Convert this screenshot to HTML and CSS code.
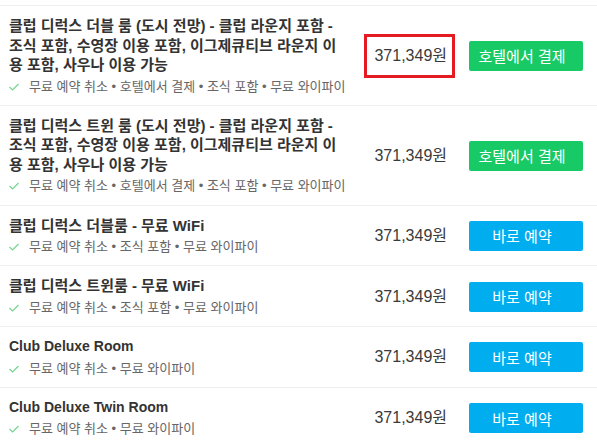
FILE: index.html
```html
<!DOCTYPE html>
<html lang="ko">
<head>
<meta charset="utf-8">
<title>객실 목록</title>
<link rel="stylesheet" href="styles.css">
</head>
<body>
<div class="room-list">
  <div class="room">
    <div class="info">
      <div class="title">클럽 디럭스 더블 룸 (도시 전망) - 클럽 라운지 포함 - 조식 포함, 수영장 이용 포함, 이그제큐티브 라운지 이용 포함, 사우나 이용 가능</div>
      <div class="meta"><svg class="check" viewBox="0 0 10 8" width="10" height="8"><polyline points="0.5,4 3.5,7 9.5,1"/></svg>무료 예약 취소 • 호텔에서 결제 • 조식 포함 • 무료 와이파이</div>
    </div>
    <div class="price-col"><span class="price highlight">371,349원</span></div>
    <button class="btn btn-hotel">호텔에서 결제</button>
  </div>
  <div class="room">
    <div class="info">
      <div class="title">클럽 디럭스 트윈 룸 (도시 전망) - 클럽 라운지 포함 - 조식 포함, 수영장 이용 포함, 이그제큐티브 라운지 이용 포함, 사우나 이용 가능</div>
      <div class="meta"><svg class="check" viewBox="0 0 10 8" width="10" height="8"><polyline points="0.5,4 3.5,7 9.5,1"/></svg>무료 예약 취소 • 호텔에서 결제 • 조식 포함 • 무료 와이파이</div>
    </div>
    <div class="price-col"><span class="price">371,349원</span></div>
    <button class="btn btn-hotel">호텔에서 결제</button>
  </div>
  <div class="room">
    <div class="info">
      <div class="title">클럽 디럭스 더블룸 - 무료 WiFi</div>
      <div class="meta"><svg class="check" viewBox="0 0 10 8" width="10" height="8"><polyline points="0.5,4 3.5,7 9.5,1"/></svg>무료 예약 취소 • 조식 포함 • 무료 와이파이</div>
    </div>
    <div class="price-col"><span class="price">371,349원</span></div>
    <button class="btn btn-book">바로 예약</button>
  </div>
  <div class="room">
    <div class="info">
      <div class="title">클럽 디럭스 트윈룸 - 무료 WiFi</div>
      <div class="meta"><svg class="check" viewBox="0 0 10 8" width="10" height="8"><polyline points="0.5,4 3.5,7 9.5,1"/></svg>무료 예약 취소 • 조식 포함 • 무료 와이파이</div>
    </div>
    <div class="price-col"><span class="price">371,349원</span></div>
    <button class="btn btn-book">바로 예약</button>
  </div>
  <div class="room">
    <div class="info">
      <div class="title latin">Club Deluxe Room</div>
      <div class="meta"><svg class="check" viewBox="0 0 10 8" width="10" height="8"><polyline points="0.5,4 3.5,7 9.5,1"/></svg>무료 예약 취소 • 무료 와이파이</div>
    </div>
    <div class="price-col"><span class="price">371,349원</span></div>
    <button class="btn btn-book">바로 예약</button>
  </div>
  <div class="room">
    <div class="info">
      <div class="title latin">Club Deluxe Twin Room</div>
      <div class="meta"><svg class="check" viewBox="0 0 10 8" width="10" height="8"><polyline points="0.5,4 3.5,7 9.5,1"/></svg>무료 예약 취소 • 무료 와이파이</div>
    </div>
    <div class="price-col"><span class="price">371,349원</span></div>
    <button class="btn btn-book">바로 예약</button>
  </div>
</div>
</body>
</html>
```
FILE: styles.css
```css
html, body {
  margin: 0;
  padding: 0;
  background: #fff;
}
body {
  font-family: "Liberation Sans", "Noto Sans CJK KR", Arial, sans-serif;
  color: #333;
  overflow: hidden;
}
.room-list {
  padding-top: 5px;
}
.room {
  display: flex;
  align-items: center;
  border-top: 1px solid #eeeeee;
  padding: 10px 14px 9.25px 9px;
}
.info {
  flex: 1;
  min-width: 0;
  padding-right: 15px;
}
.title {
  font-size: 15px;
  font-weight: bold;
  line-height: 19.5px;
  color: #333;
  word-break: break-all;
}
.title.latin {
  font-size: 14px;
}
.meta {
  margin-top: 3px;
  font-size: 13px;
  line-height: 18px;
  color: #666;
  white-space: nowrap;
  display: flex;
  align-items: center;
}
.check {
  flex: none;
  margin-right: 10px;
  fill: none;
  stroke: #73d58f;
  stroke-width: 1.2;
}
.price-col {
  flex: none;
  width: 90px;
  text-align: right;
  margin-right: 22px;
}
.price {
  position: relative;
  display: inline-block;
  font-size: 16px;
  line-height: 20px;
  color: #3a3a3a;
}
.price.highlight::after {
  content: "";
  position: absolute;
  top: -12px;
  bottom: -12px;
  left: -10px;
  right: -8px;
  border: 3px solid #e41b23;
}
.btn {
  flex: none;
  width: 114px;
  height: 30px;
  border: none;
  border-radius: 2px;
  padding: 0 8px 0 0;
  font-family: "Liberation Sans", "Noto Sans CJK KR", Arial, sans-serif;
  font-size: 15px;
  color: #fff;
  cursor: pointer;
}
.btn-hotel {
  background: #18ca66;
}
.btn-book {
  background: #00aeef;
}
```
